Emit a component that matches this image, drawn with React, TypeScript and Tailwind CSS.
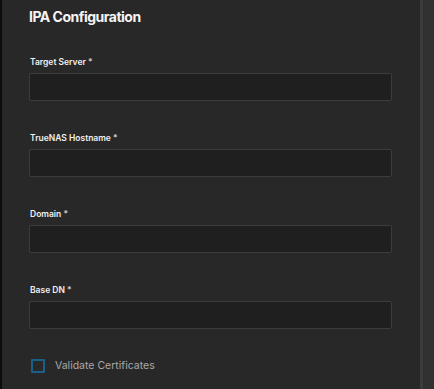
const fields = ["Target Server", "TrueNAS Hostname", "Domain", "Base DN"];

export default function App() {
  return (
    <div className="flex h-[389px] w-[434px] overflow-hidden bg-[#282828]" style={{ fontFamily: "Inter, 'Open Sans', sans-serif" }}>
      <div className="w-[2px] shrink-0 bg-[#0c0c0c]" />
      <div className="flex-1">
        <div className="pl-[27px] pr-[28px] pt-[7px]">
          <h2 className="text-[14px] font-bold leading-[20px] tracking-[-0.5px] text-[#f4f4f4]">IPA Configuration</h2>
          <div className="mt-[28px] flex flex-col gap-[30px]">
            {fields.map((label) => (
              <div key={label}>
                <div className="pl-[1px] text-[8.5px] font-semibold leading-[14px] text-[#f0f0f0]">
                  {label} <span className="text-[#d0d0d0]">*</span>
                </div>
                <div className="mt-[4px] h-[28px] w-[363px] rounded-[2px] border border-[#3c3c3c] bg-[#1f1f1f]" />
              </div>
            ))}
          </div>
          <label className="mt-[29px] flex items-center gap-[10px]">
            <span className="ml-[2px] h-[14px] w-[14px] rounded-[1px] border-2 border-[#1a5f86]" />
            <span className="text-[10.5px] leading-[16px] text-[#a8a8a8]">Validate Certificates</span>
          </label>
        </div>
      </div>
      <div className="w-[3px] shrink-0 bg-[#3b3b3b]" />
      <div className="w-[12px] shrink-0 bg-[#313131]" />
    </div>
  );
}
